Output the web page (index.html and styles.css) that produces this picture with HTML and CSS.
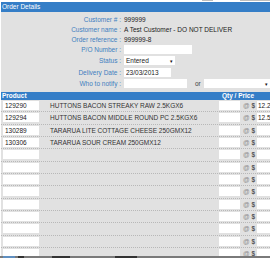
FILE: index.html
```html
<!DOCTYPE html>
<html lang="en">

<head>
  <meta charset="UTF-8">
  <title>Order Details</title>
  <link rel="stylesheet" href="styles.css">
</head>

<body>
  <div class="topbar">
    <span class="btn b1"></span>
    <span class="btn b2"></span>
  </div>

  <div class="order">
    <div class="head">Order Details</div>

    <div class="info">
      <div class="row"><span class="lbl">Customer # :</span><span class="val">999999</span></div>
      <div class="row"><span class="lbl">Customer name :</span><span class="val">A Test Customer - DO NOT DELIVER</span></div>
      <div class="row"><span class="lbl">Order reference :</span><span class="val">999999-8</span></div>
      <div class="row f"><span class="lbl">P/O Number :</span><input class="txt po" type="text"></div>
      <div class="row f"><span class="lbl">Status :</span>
        <div class="sel status"><span>Entered</span><span class="arrow">&#9662;</span></div>
      </div>
      <div class="row f"><span class="lbl">Delivery Date :</span><input class="txt date" type="text" value="23/03/2013"></div>
      <div class="row f"><span class="lbl">Who to notify :</span><input class="txt who" type="text">
        <span class="or">or</span>
        <div class="sel notify"><span></span><span class="arrow">&#9662;</span></div>
      </div>
    </div>

    <div class="ghead">
      <span class="c-prod">Product</span>
      <span class="c-qp">Qty / Price</span>
    </div>

    <div class="items">
      <div class="item"><input class="code" type="text" value="129290"><span class="desc">HUTTONS BACON STREAKY RAW 2.5KGX6</span><input class="qty" type="text"><span class="at">@ <b>$</b></span><input class="price" type="text" value="12.25"></div>
      <div class="item"><input class="code" type="text" value="129294"><span class="desc">HUTTONS BACON MIDDLE ROUND PC 2.5KGX6</span><input class="qty" type="text"><span class="at">@ <b>$</b></span><input class="price" type="text" value="12.50"></div>
      <div class="item"><input class="code" type="text" value="130289"><span class="desc">TARARUA LITE COTTAGE CHEESE 250GMX12</span><input class="qty" type="text"><span class="at">@ <b>$</b></span><input class="price" type="text"></div>
      <div class="item"><input class="code" type="text" value="130306"><span class="desc">TARARUA SOUR CREAM 250GMX12</span><input class="qty" type="text"><span class="at">@ <b>$</b></span><input class="price" type="text"></div>
      <div class="item"><input class="code" type="text"><span class="desc"></span><input class="qty" type="text"><span class="at">@ <b>$</b></span><input class="price" type="text"></div>
      <div class="item"><input class="code" type="text"><span class="desc"></span><input class="qty" type="text"><span class="at">@ <b>$</b></span><input class="price" type="text"></div>
      <div class="item"><input class="code" type="text"><span class="desc"></span><input class="qty" type="text"><span class="at">@ <b>$</b></span><input class="price" type="text"></div>
      <div class="item"><input class="code" type="text"><span class="desc"></span><input class="qty" type="text"><span class="at">@ <b>$</b></span><input class="price" type="text"></div>
      <div class="item"><input class="code" type="text"><span class="desc"></span><input class="qty" type="text"><span class="at">@ <b>$</b></span><input class="price" type="text"></div>
      <div class="item"><input class="code" type="text"><span class="desc"></span><input class="qty" type="text"><span class="at">@ <b>$</b></span><input class="price" type="text"></div>
      <div class="item"><input class="code" type="text"><span class="desc"></span><input class="qty" type="text"><span class="at">@ <b>$</b></span><input class="price" type="text"></div>
      <div class="item"><input class="code" type="text"><span class="desc"></span><input class="qty" type="text"><span class="at">@ <b>$</b></span><input class="price" type="text"></div>
      <div class="item"><input class="code" type="text"><span class="desc"></span><input class="qty" type="text"><span class="at">@ <b>$</b></span><input class="price" type="text"></div>
    </div>
  </div>

  <div class="taskbar">
    <span class="tb start"></span>
    <span class="tb t1"></span>
    <span class="tb t2"></span>
    <span class="tb t3"></span>
  </div>
</body>

</html>
```

FILE: styles.css
```css
html,
body {
  margin: 0;
  padding: 0;
  overflow: hidden;
}

body {
  font-family: "Liberation Sans", Arial, sans-serif;
  font-size: 6.5px;
  color: #222;
  background: #fff;
  width: 270px;
  height: 258px;
}

input {
  font: inherit;
  color: #222;
  border: none;
  outline: none;
  background: #fff;
  margin: 0;
  padding: 0 2px;
  box-sizing: border-box;
  height: 9px;
}

.topbar {
  height: 2px;
  display: flex;
}

.topbar .btn {
  height: 1px;
  background: #bdbdbd;
}

.b1 {
  margin-left: 202px;
  width: 11px;
}

.b2 {
  margin-left: 27px;
  width: 30px;
}

.order {
  margin-left: 1px;
  width: 269px;
  overflow: hidden;
  background: #e1e1e1;
}

.head {
  height: 10px;
  line-height: 10px;
  padding-left: 1px;
  background: #357ec7;
  color: #fff;
}

.info {
  padding: 2px 0 2.7px;
}

.row {
  display: flex;
  align-items: center;
  height: 10px;
}

.row.f {
  height: 11.33px;
}

.lbl {
  width: 122px;
  padding-right: 2px;
  box-sizing: border-box;
  text-align: right;
  color: #3f7fc0;
}

.val {
  margin-left: 1px;
}

.row .txt,
.row .sel {
  margin-left: 1px;
}

.po {
  width: 68px;
}

.date {
  width: 47px;
}

.who {
  width: 63px;
}

.sel {
  display: flex;
  align-items: center;
  justify-content: space-between;
  height: 9px;
  padding: 0 2px;
  box-sizing: border-box;
  background: #fff;
}

.status {
  width: 51px;
}

.notify {
  width: 66px;
}

.row .notify {
  margin-left: 0;
}

.arrow {
  font-size: 5px;
  color: #111;
}

.or {
  margin: 0 3px 0 8px;
  color: #444;
}

.ghead,
.item {
  display: grid;
  grid-template-columns: 38px 180px 21px 17px 13px;
  align-items: center;
}

.ghead {
  height: 8px;
  line-height: 8px;
  background: #357ec7;
  color: #fff;
  font-weight: bold;
}

.c-prod {
  grid-column: 1 / 3;
  padding-left: 1px;
}

.c-qp {
  grid-column: 3 / 5;
  text-align: center;
}

.item {
  height: 12.33px;
  box-sizing: border-box;
  border-bottom: 1px dotted #b8b8b8;
}

.code {
  margin-left: 2px;
  width: 36px;
}

.desc {
  padding-left: 11px;
  color: #333;
  white-space: nowrap;
}

.qty {
  width: 21px;
}

.at {
  padding-left: 3px;
  color: #8a8a8a;
}

.at b {
  color: #555;
}

.price {
  width: 13px;
  padding: 0 0 0 1px;
}

.taskbar {
  position: fixed;
  left: 0;
  bottom: 0;
  width: 270px;
  height: 2px;
  display: flex;
  background: #7a7a7a;
}

.tb {
  height: 2px;
  background: #333;
}

.start {
  width: 12px;
  background: #5f8fc0;
  margin-left: 3px;
}

.t1 {
  width: 6px;
  margin-left: 3px;
}

.t2 {
  width: 18px;
  margin-left: 28px;
}

.t3 {
  width: 22px;
  margin-left: 45px;
}
```
